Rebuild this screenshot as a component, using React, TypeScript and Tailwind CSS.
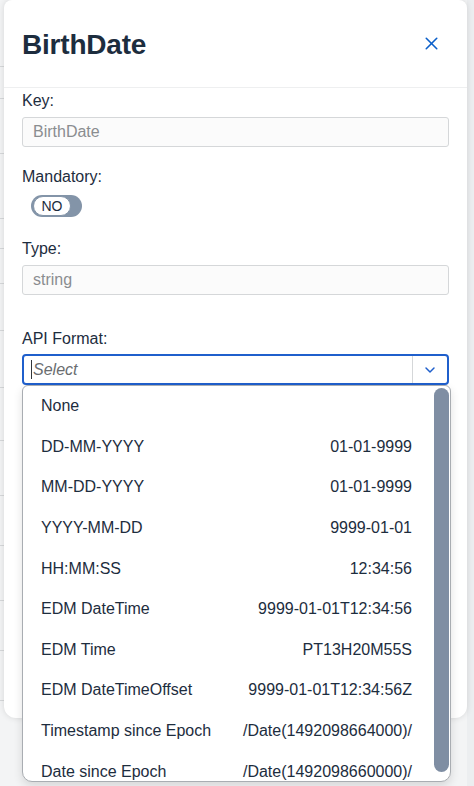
import { ChevronDown, X } from 'lucide-react';

const options: [string, string][] = [
  ['None', ''],
  ['DD-MM-YYYY', '01-01-9999'],
  ['MM-DD-YYYY', '01-01-9999'],
  ['YYYY-MM-DD', '9999-01-01'],
  ['HH:MM:SS', '12:34:56'],
  ['EDM DateTime', '9999-01-01T12:34:56'],
  ['EDM Time', 'PT13H20M55S'],
  ['EDM DateTimeOffset', '9999-01-01T12:34:56Z'],
  ['Timestamp since Epoch', '/Date(1492098664000)/'],
  ['Date since Epoch', '/Date(1492098660000)/'],
];

const bgLines = [66, 98, 153, 218, 248, 283, 330, 387, 440, 495, 545, 600, 650, 700];

function Field({ label, value }: { label: string; value: string }) {
  return (
    <>
      <div className="h-[20px] text-[16px] leading-[20px] text-[#1d2d3e]">{label}</div>
      <div className="mt-[6px] flex h-[30px] items-center rounded-[3px] border border-[#d5d7d9] bg-[#fbfbfb] px-[10px] text-[16px] text-[#8a8d90]">
        {value}
      </div>
    </>
  );
}

export default function App() {
  return (
    <div
      className="relative flex h-[786px] w-[474px] overflow-hidden bg-[#f3f4f5] text-[#1d2d3e]"
      style={{ fontFamily: '"Liberation Sans", Arial, sans-serif' }}
    >
      {/* background page peeking out on the left */}
      <div className="flex w-[4px] shrink-0 flex-col">
        {bgLines.map((y) => (
          <div key={y} className="absolute left-0 h-px w-[4px] bg-[#d6d8da]" style={{ top: y }} />
        ))}
      </div>

      {/* Side panel */}
      <div className="relative z-10 flex h-[718px] w-[463px] shrink-0 flex-col rounded-b-[12px] rounded-t-[8px] bg-white shadow-[0_0_6px_rgba(0,0,0,0.12)]">
        {/* Header */}
        <div className="flex h-[88px] shrink-0 items-center justify-between border-b border-[#eeeff0] pl-[18px] pr-[25px]">
          <h1 className="mt-[2px] text-[28px] font-bold tracking-[-0.2px] text-[#1d2d3e]">BirthDate</h1>
          <X className="h-[21px] w-[21px] text-[#0a5fc9]" strokeWidth={1.8} />
        </div>

        {/* Form */}
        <div className="flex flex-col px-[18px] pt-[3px]">
          <Field label="Key:" value="BirthDate" />

          <div className="mt-[20px] h-[20px] text-[16px] leading-[20px]">Mandatory:</div>
          <div className="mt-[8px] ml-[9px] flex h-[22px] w-[51px] items-center rounded-full bg-[#8394a8] p-[2px]">
            <div className="flex h-[20px] w-[38px] items-center justify-center rounded-full border border-[#8394a8] bg-white text-[14px] text-[#1d2d3e]">
              NO
            </div>
          </div>

          <div className="mt-[22px]">
            <Field label="Type:" value="string" />
          </div>

          <div className="mt-[34px] h-[20px] text-[16px] leading-[20px]">API Format:</div>
          <div className="relative mt-[5px]">
            <div className="flex h-[31px] items-stretch rounded-[4px] border-2 border-[#1f5fcc] bg-white">
              <div className="flex flex-1 items-center pl-[7px] text-[16px] italic text-[#6a6d70]">
                <span className="mr-[1px] h-[19px] w-px bg-[#32363a]" />
                Select
              </div>
              <div className="flex w-[35px] items-center justify-center border-l border-[#d5d7d9]">
                <ChevronDown className="h-[16px] w-[16px] text-[#1f5fcc]" strokeWidth={2.2} />
              </div>
            </div>

            {/* Dropdown list */}
            <div className="absolute left-0 right-[-2px] top-full z-20 h-[397px] overflow-hidden rounded-b-[10px] rounded-t-[6px] border border-[#a9adb2] bg-white shadow-[0_4px_10px_rgba(0,0,0,0.12)]">
              <div className="flex h-full">
                <div className="flex flex-1 flex-col pl-[18px] pr-[22px]">
                  {options.map(([name, sample]) => (
                    <div
                      key={name}
                      className="flex h-[40.6px] shrink-0 items-center justify-between text-[16px] text-[#1d2d3e]"
                    >
                      <span>{name}</span>
                      <span>{sample}</span>
                    </div>
                  ))}
                </div>
                <div className="flex w-[16px] shrink-0 pr-[1px] pb-[9px] pt-[2px]">
                  <div className="w-full rounded-full bg-[#7f8ea3]" />
                </div>
              </div>
            </div>
          </div>
        </div>
      </div>

      {/* right edge of page behind */}
      <div className="w-[7px] shrink-0 bg-[#eceef0]" />
    </div>
  );
}
